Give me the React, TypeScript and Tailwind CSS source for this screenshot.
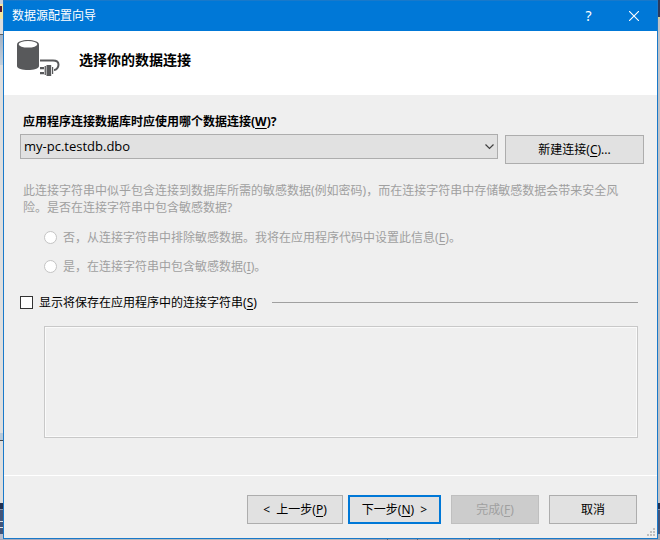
import React, { useState } from 'react';

const dialogFont = "font-['Noto_Sans','Noto_Sans_CJK_SC',sans-serif]";
const buttonBase = 'h-[29px] text-xs leading-4 text-center whitespace-pre';
const buttonNormal = 'border border-[#adadad] bg-[#e1e1e1] text-black';

function Key({ children }: { children: string }) {
  return <>(<u className="underline-offset-2">{children}</u>)</>;
}

function DatabaseIcon() {
  return (
    <svg viewBox="0 0 44 38" className="w-11 h-[38px] shrink-0" aria-hidden="true">
      <path d="M1 5.500C1 -0.500 23 -0.500 23 5.500V27c0 5.300-22 5.300-22 0z" fill="#58595b" />
      <ellipse cx="12" cy="5.300" rx="9.300" ry="3.300" fill="#fff" />
      <path d="M24 21.500h13c3.500 0 5.500 1.800 5.500 4.300s-2 5.200-4.500 5.200" fill="none" stroke="#58595b" strokeWidth="2" />
      <path d="M24 28h4v2.300h-4zM24 33h4v2.300h-4zM28.600 27h1.300v9h-1.300zM30.500 26h4.700v11h-4.700zM36 28h1.200v7H36z" fill="#58595b" />
    </svg>
  );
}

function ResizeGrip() {
  return (
    <svg viewBox="0 0 8 8" className="absolute right-[2px] bottom-[2px] w-2 h-2" aria-hidden="true">
      <path d="M6 0h2v2H6zM3 3h2v2H3zM6 3h2v2H6zM0 6h2v2H0zM3 6h2v2H3zM6 6h2v2H6z" fill="#bfbfbf" />
    </svg>
  );
}

// Slivers of the editor window that stay visible around the dialog
function LeftEdge() {
  return (
    <div className="w-[3px] shrink-0 flex flex-col">
      <div className="h-1 bg-[#c9cfdd]" />
      <div className="h-[2px] bg-[#f5e6a0]" />
      <div className="h-[6px] bg-[#f5e6a0] border-l-2 border-[#5a1a30]" />
      <div className="h-[7px] bg-[#f5e6a0]" />
      <div className="h-[15px] bg-[#dedede]" />
      <div className="h-px bg-[#606060]" />
      <div className="h-[30px] bg-linear-to-b from-[#a3b2c4] to-[#c3cfdb]" />
      <div className="flex-1 bg-[#dedede]" />
      <div className="h-[7px] bg-[#b9cad9]" />
      <div className="h-px bg-[#444444]" />
      <div className="h-[62px] bg-[#dedede]" />
      <div className="h-[6px] bg-[#22304f]" />
      <div className="h-px bg-[#8a93a8]" />
      <div className="h-[11px] bg-[#43557a]" />
      <div className="h-px bg-[#e0e0e0]" />
      <div className="h-[5px] bg-[#43557a]" />
      <div className="h-px bg-[#e0e0e0]" />
      <div className="h-[6px] bg-[#43557a]" />
      <div className="h-[5px] bg-[#b9bdcd]" />
    </div>
  );
}

function RightEdge() {
  return (
    <div className="w-[2px] shrink-0 flex flex-col">
      <div className="h-[17px] bg-[#2b3a5c]" />
      <div className="h-[2px] bg-[#d8cf96]" />
      <div className="flex-1 bg-[#c3c3c6]" />
      <div className="h-[6px] bg-[#22304f]" />
      <div className="h-px bg-[#8a93a8]" />
      <div className="h-[24px] bg-[#43557a]" />
      <div className="h-[5px] bg-[#a5a9b5]" />
    </div>
  );
}

function BottomEdge() {
  return (
    <div className="h-[2px] flex">
      <div className="w-20 bg-[#a9abbb]" />
      <div className="flex-1 bg-[#b9b9b9]" />
      <div className="w-7 bg-[#9fa0ae] border-r border-[#666873]" />
      <div className="w-[30px] bg-[#9fa0ae] border-r border-[#666873]" />
      <div className="w-[52px] bg-[#9fa0ae] border-r border-[#666873]" />
      <div className="w-[30px] bg-[#9fa0ae] border-r border-[#666873]" />
      <div className="w-40 bg-[#9fa0ae]" />
    </div>
  );
}

export default function App() {
  const [showString, setShowString] = useState(false);

  return (
    <div className={`min-h-screen flex flex-col text-xs text-black ${dialogFont}`}>
      <div className="flex-1 flex">
        <LeftEdge />
        <div role="dialog" aria-labelledby="title" className="relative flex-1 min-w-0 flex flex-col border border-[#1979ca] bg-[#efefef]">

          {/* TITLE BAR */}
          <header className="h-[30px] flex items-center pl-2 bg-[#0078d7] text-white">
            <h1 id="title" className="flex-1">数据源配置向导</h1>
            <button type="button" aria-label="帮助" className="w-[45px] h-full text-sm">?</button>
            <button type="button" aria-label="关闭" className="w-[46px] h-full flex items-center justify-center">
              <svg viewBox="0 0 10 10" className="w-[10px] h-[10px]" aria-hidden="true">
                <path d="M0 0l10 10M10 0L0 10" stroke="#fff" strokeWidth="1.1" />
              </svg>
            </button>
          </header>

          {/* PAGE HEADING */}
          <div className="h-16 flex items-start bg-white pl-3 pt-2">
            <DatabaseIcon />
            <h2 className="ml-[19px] mt-[11px] text-sm leading-5 font-bold">选择你的数据连接</h2>
          </div>

          {/* CONNECTION */}
          <main className="flex-1 flex flex-col pl-4 pr-[19px] pt-[18px] pb-[37px]">
            <label htmlFor="connection" className="pl-[3px] leading-[18px] font-bold">
              应用程序连接数据库时应使用哪个数据连接<Key>W</Key>?
            </label>
            <div className="mt-[3px] -mr-[6px] flex items-start gap-[7px]">
              <div className="relative flex-1">
                <select id="connection" className="block w-full h-[25px] pl-[3px] appearance-none border border-[#adadad] bg-[#e1e1e1] font-['Open_Sans',sans-serif] text-[13px]">
                  <option>my-pc.testdb.dbo</option>
                </select>
                <svg viewBox="0 0 9 6" className="absolute right-1 top-[10px] w-[9px] h-[6px] pointer-events-none" aria-hidden="true">
                  <path d="M.5 .5l4 4 4-4" fill="none" stroke="#404040" strokeWidth="1.2" />
                </svg>
              </div>
              <button type="button" className={`${buttonBase} ${buttonNormal} w-[139px] mt-px`}>新建连接<Key>C</Key>...</button>
            </div>

            <fieldset disabled className="text-[#a0a0a0] leading-[17px]">
              <p className="mt-[18px] pl-[3px]">
                此连接字符串中似乎包含连接到数据库所需的敏感数据(例如密码)，而在连接字符串中存储敏感数据会带来安全风险。是否在连接字符串中包含敏感数据?
              </p>
              <label className="mt-[13px] ml-6 flex items-center gap-[6px]">
                <input type="radio" name="sensitive" className="appearance-none w-[13px] h-[13px] rounded-full border border-[#c4c4c4] bg-white" />
                <span>否，从连接字符串中排除敏感数据。我将在应用程序代码中设置此信息<Key>E</Key>。</span>
              </label>
              <label className="mt-3 ml-6 flex items-center gap-[6px]">
                <input type="radio" name="sensitive" className="appearance-none w-[13px] h-[13px] rounded-full border border-[#c4c4c4] bg-white" />
                <span>是，在连接字符串中包含敏感数据<Key>I</Key>。</span>
              </label>
            </fieldset>

            <div className="mt-[19px] flex items-center leading-[17px]">
              <label className="flex items-center gap-[6px]">
                <input
                  type="checkbox"
                  checked={showString}
                  onChange={(e) => setShowString(e.target.checked)}
                  className="appearance-none w-[13px] h-[13px] border border-[#333333] bg-white checked:bg-[#333333]"
                />
                <span>显示将保存在应用程序中的连接字符串<Key>S</Key></span>
              </label>
              <div className="flex-1 ml-[15px] h-px bg-[#a0a0a0]" />
            </div>
            <textarea
              readOnly
              aria-label="连接字符串"
              className="flex-1 min-h-[112px] mt-[15px] ml-6 resize-none border border-[#c8c8c8] bg-[#efefef] shadow-[inset_0_0_0_1px_#fafafa] outline-none"
            />
          </main>

          {/* BUTTONS */}
          <footer className="h-[63px] flex justify-end pt-[19px] pr-5 border-t border-white">
            <button type="button" className={`${buttonBase} ${buttonNormal} w-24`}>{'<  '}上一步<Key>P</Key></button>
            <button type="button" className={`${buttonBase} w-[93px] ml-[5px] border-2 border-[#0078d7] bg-[#e1e1e1]`}>下一步<Key>N</Key>{'  >'}</button>
            <button type="button" disabled className={`${buttonBase} w-[88px] ml-[10px] border border-[#bfbfbf] bg-[#cccccc] text-[#a0a0a0]`}>完成<Key>F</Key></button>
            <button type="button" className={`${buttonBase} ${buttonNormal} w-[88px] ml-[10px]`}>取消</button>
          </footer>
          <ResizeGrip />
        </div>
        <RightEdge />
      </div>
      <BottomEdge />
    </div>
  );
}
